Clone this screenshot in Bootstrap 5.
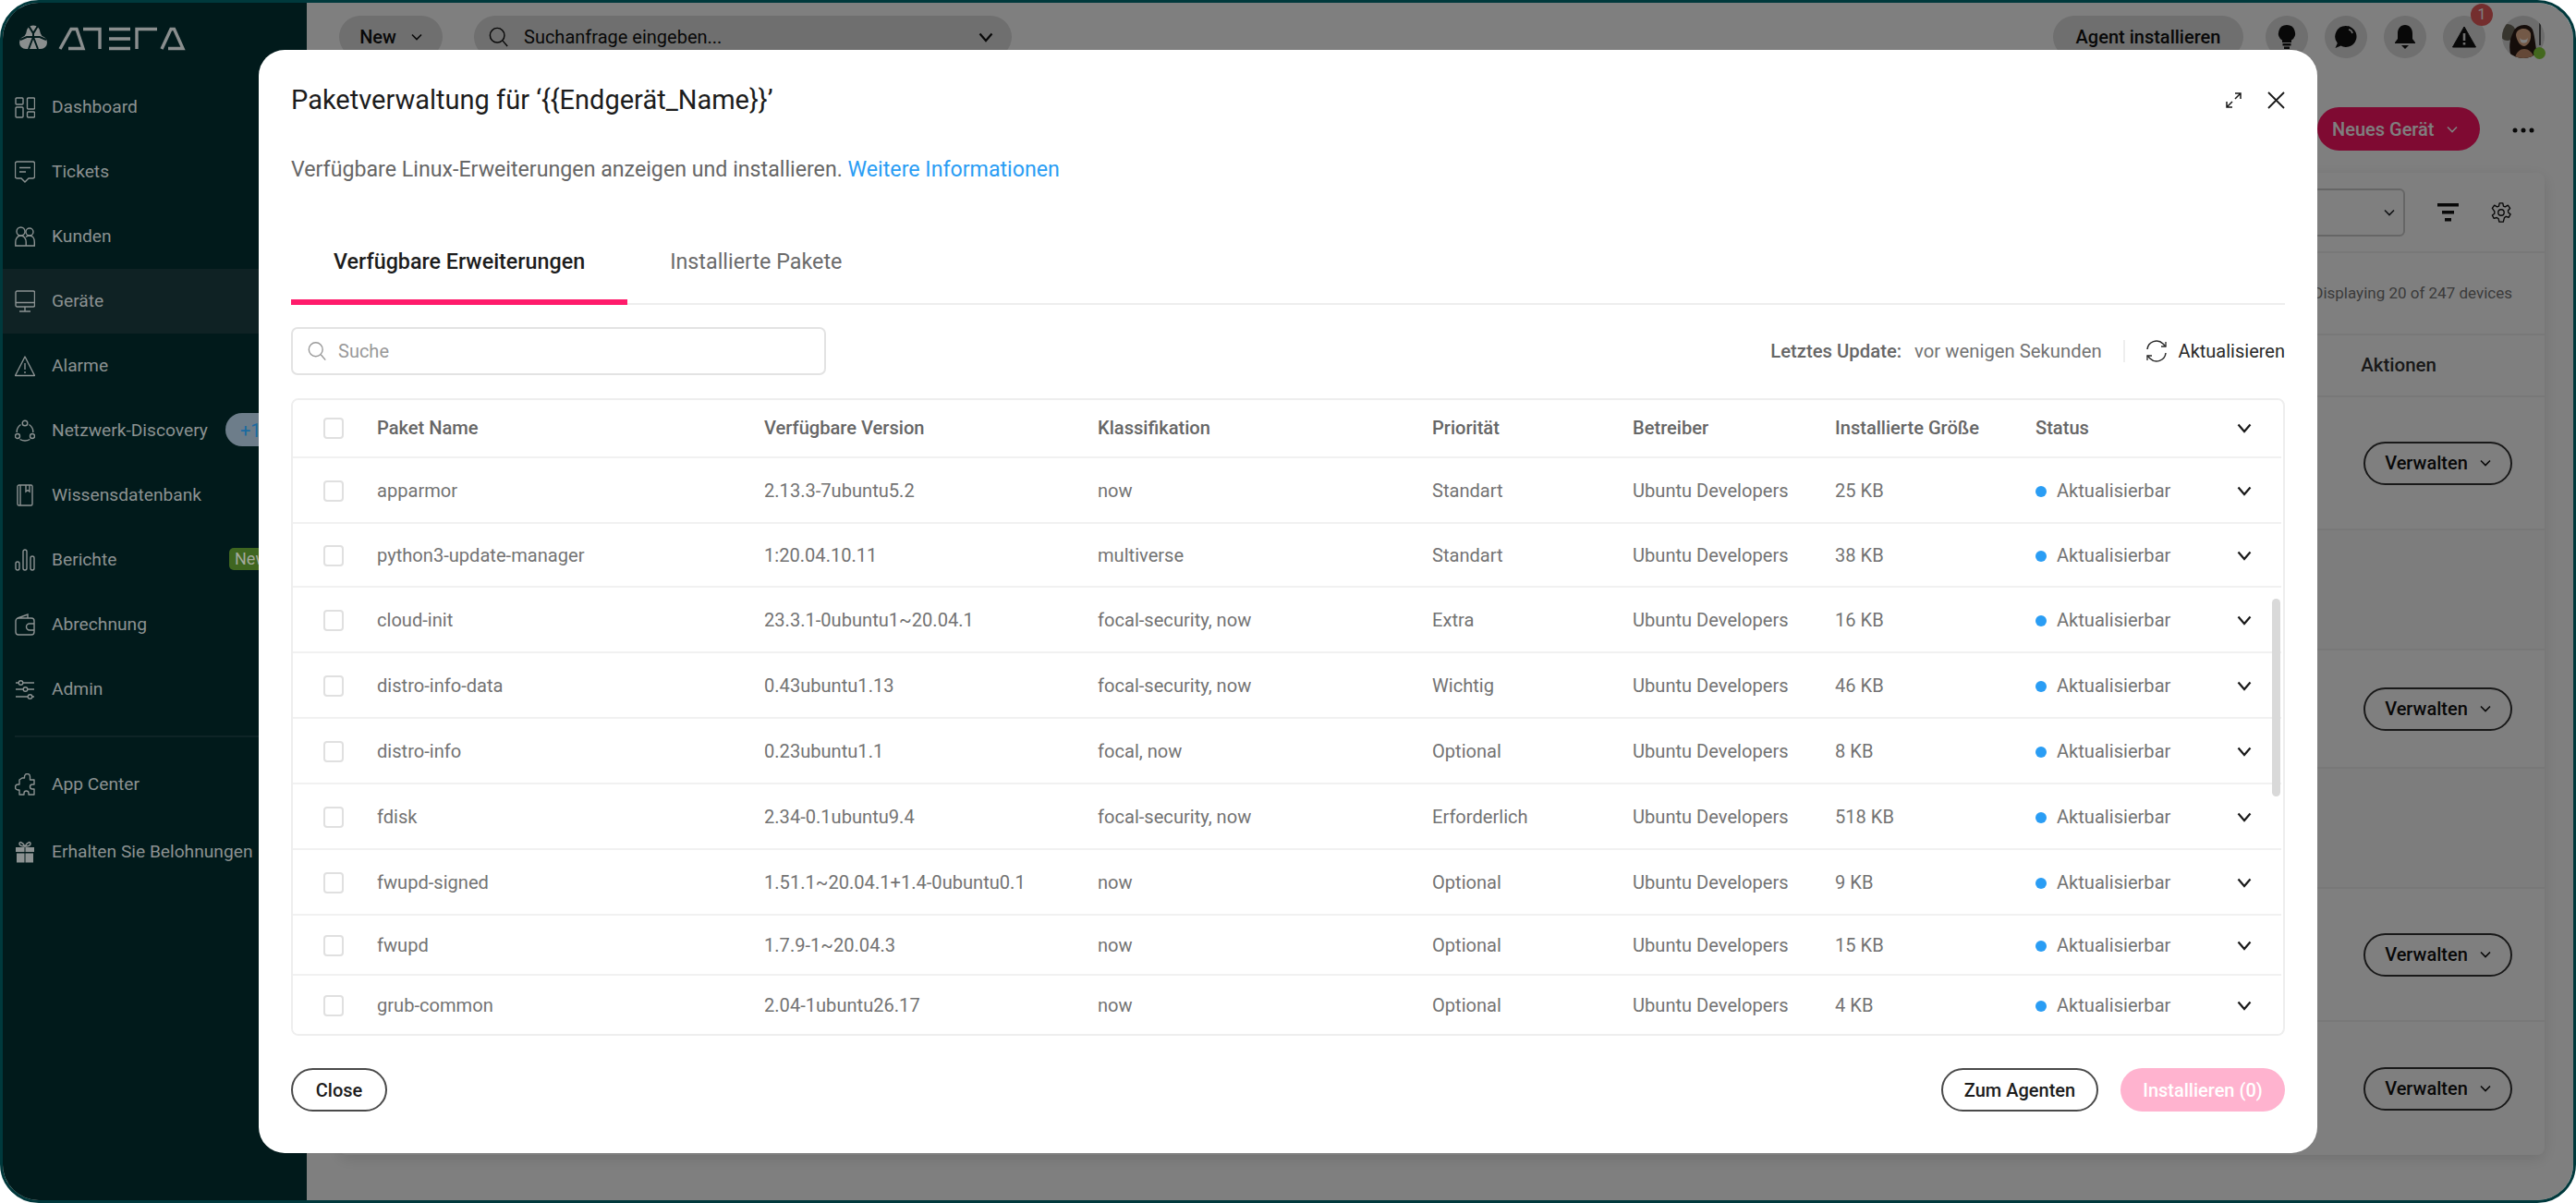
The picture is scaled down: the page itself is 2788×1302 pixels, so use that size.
<!DOCTYPE html>
<html lang="de">
<head>
<meta charset="UTF-8">
<title>Paketverwaltung</title>
<link href="https://cdn.jsdelivr.net/npm/bootstrap@5.3.3/dist/css/bootstrap.min.css" rel="stylesheet">
<style>
    html, body { height: 100%; background: #fff; }
    body { font-family: Roboto, "Liberation Sans", sans-serif; font-size: 20px; overflow: hidden; }

    /* app behind the modal */
    .app-frame { position: relative; width: 2788px; height: 1302px; border: 3px solid #00393c; border-radius: 42px; overflow: hidden; background: #fff; }
    .dim-layer { position: absolute; inset: 0; background: rgba(0,0,0,.5); }
    .side-col { position: relative; z-index: 2; width: 329px; height: 100%; background: #011a1b; flex: none; }
    .logo-svg { display: block; margin: 20px 0 0 15px; }
    .side-item { display: flex; align-items: center; gap: 18px; padding-left: 13px; height: 70px; font-size: 19.2px; color: #8c9292; white-space: nowrap; }
    .side-item svg { width: 22px; height: 24px; flex: none; }
    .side-active { background: #0f2224; }
    .side-list { margin-top: 22px; }
    .side-rule { height: 2px; background: #0e2426; margin: 15px 0 16px 13px; }
    .side-item:last-child { margin-top: 3px; }
    .plus-pill { position: absolute; left: 241px; top: 444px; width: 70px; height: 36px; border-radius: 18px; background: #6d7d8a; color: #1a6aa0; font-size: 20px; padding: 4px 0 0 16px; }
    .new-pill { position: absolute; left: 245px; top: 590px; width: 60px; height: 24px; border-radius: 5px; background: #3f6620; color: #a3aa9c; font-size: 18px; line-height: 24px; padding-left: 6px; }

    .main-col { min-width: 0; }
    .top-row { padding: 14px 31px 0 35px; }
    .top-pill { height: 46px; border-radius: 23px; background: #dedede; color: #111; font-weight: 500; font-size: 20px; display: flex; align-items: center; }
    .p-new { width: 112px; } .p-find { width: 582px; margin-left: 34px; } .p-agent { width: 206px; }
    .ico-group { gap: 18px; margin-left: 24px; }
    .round-ico { width: 46px; height: 46px; border-radius: 50%; background: #dedede; display: flex; align-items: center; justify-content: center; color: #111; position: relative; }
    .count-dot { position: absolute; top: -13px; right: -8px; width: 24px; height: 24px; border-radius: 50%; background: #e85d5d; color: #fff; font-size: 16px; line-height: 24px; text-align: center; }
    .face-wrap { position: relative; width: 46px; height: 46px; }
    .online-dot { position: absolute; right: -1px; bottom: -1px; width: 13px; height: 13px; border-radius: 50%; background: #86d13d; }
    .head-row { margin-top: 53px; padding-right: 31px; }
    .add-pill { width: 176px; height: 47px; border-radius: 24px; background: #ff1464; color: #fff; font-size: 20px; font-weight: 500; padding-left: 16px; gap: 13px; }
    .more-dots { width: 46px; margin-left: 24px; text-align: center; }
    .dev-card { margin: 24px 31px 0 35px; height: 1063px; background: #fff; box-shadow: 0 4px 16px rgba(0,0,0,.12); border-radius: 8px; }
    .dev-row { border-bottom: 2px solid #f0f0f0; display: flex; align-items: center; justify-content: flex-end; padding-right: 35px; }
    .dev-tools { height: 87px; padding-right: 36px; gap: 35px; }
    .dev-select { width: 300px; height: 52px; border: 2px solid #ccc; border-radius: 6px; display: flex; align-items: center; justify-content: flex-end; padding-right: 9px; }
    .dev-info { height: 89px; color: #777; font-size: 17px; }
    .dev-head { height: 67px; font-weight: 500; font-size: 20.5px; color: #333; padding-right: 117px; }
    .dev-h144 { height: 144px; }
    .dev-h128 { height: 128px; }
    .dev-h130 { height: 130px; background: #fbfbfb; }
    .manage-btn { width: 161px; height: 47px; border: 2px solid #333; border-radius: 24px; font-weight: 500; color: #111; display: flex; align-items: center; justify-content: center; gap: 13px; }

    /* modal */
    .sheet-wrap { position: absolute; z-index: 3; left: 277px; top: 51px; width: 2228px; height: 1194px; }
    .sheet-wrap .modal-content { height: 100%; background: #fff; border: 0; border-radius: 28px; padding: 0 35px 45px; }
    .sheet-wrap .modal-header { height: 108px; padding: 0; border: 0; }
    .sheet-title { font-size: 29px; font-weight: 400; color: #1c1c1c; margin: 0; }
    .head-tools { gap: 28px; color: #1a1a1a; }
    .sheet-lead { margin: 4px 0 36px; line-height: 34px; font-size: 23.2px; color: #666; height: 34px; }
    .sheet-lead a { color: #2a9df4; text-decoration: none; }
    .tab-strip { height: 94px; border-bottom: 2px solid #eee; flex-wrap: nowrap; }
    .tab-strip .nav-link { height: 94px; padding: 0 46px; display: flex; align-items: center; color: #6b6b6b; font-size: 23.3px; border: 0; border-radius: 0; margin: 0; }
    .tab-strip .nav-link.active { color: #1c1c1c; font-weight: 500; border-bottom: 6px solid #ff1b6b; padding-top: 6px; background: none; }
    .filter-row { margin-top: 24px; height: 52px; }
    .find-box { width: 579px; height: 52px; border: 2px solid #e3e3e3; border-radius: 7px; padding-left: 16px; gap: 12px; color: #999; font-size: 20px; background: #fff; }
    .upd-label { color: #666; font-weight: 500; font-size: 20.3px; }
    .upd-value { color: #737373; font-size: 20.3px; margin-left: 14px; }
    .upd-rule { width: 2px; height: 24px; background: #eee; margin: 0 22px 0 23px; }
    .upd-btn { color: #2a2a2a; font-size: 20px; gap: 12px; }
    .pkg-box { position: relative; margin-top: 25px; height: 690px; border: 2px solid #eee; border-radius: 8px; overflow: hidden; }
    .pkg-table { table-layout: fixed; width: 2152px; margin: 0; }
    .pkg-table th, .pkg-table td { padding: 0; vertical-align: middle; font-size: 20.1px; border-bottom: 2px solid #f1f1f1; color: #737373; white-space: nowrap; box-shadow: none; background: #fff; }
    .pkg-table th { color: #666; font-weight: 500; height: 62px; }
    .pkg-table td { height: 71px; padding-top: 2px; }
    .pkg-table tbody tr:nth-child(2) td { height: 69px; }
    .pkg-table tbody tr:nth-child(8) td { height: 65px; }
    .pkg-table tbody tr:nth-child(9) td { height: 64px; border-bottom: 0; }
    .c-box { width: 91px; } .c-name { width: 419px; } .c-ver { width: 361px; } .c-cls { width: 362px; }
    .c-pri { width: 217px; } .c-own { width: 219px; } .c-size { width: 217px; } .c-stat { width: 197px; } .c-arrow { width: 69px; }
    .tick-box { display: block; width: 22px; height: 23px; margin-left: 33px; border: 2px solid #e0e0e0; border-radius: 4px; }
    .stat-dot { display: inline-block; width: 12px; height: 12px; border-radius: 50%; background: #2a9df4; margin-right: 11px; }
    .arrow-ico { display: block; margin-left: 21px; color: #1a1a1a; }
    .scroll-thumb { position: absolute; right: 3px; top: 215px; width: 9px; height: 214px; border-radius: 5px; background: #d9d9d9; }
    .sheet-foot { margin-top: 35px; height: 47px; }
    .out-btn { height: 47px; border: 2px solid #4a4a4a; border-radius: 24px; background: #fff; color: #1c1c1c; font-size: 20px; font-weight: 500; padding: 0; display: flex; align-items: center; justify-content: center; }
    .w-close { width: 104px; } .w-agent { width: 170px; }
    .inst-btn { width: 178px; height: 47px; border: 0; border-radius: 24px; background: #ffb3cf; color: #fff; font-size: 20px; font-weight: 500; padding: 0; margin-left: 24px; }
</style>
</head>
<body>
<svg width="0" height="0" class="position-absolute">
    <symbol id="i-search" viewBox="0 0 24 24"><circle cx="10" cy="10" r="8.5" fill="none" stroke="currentColor" stroke-width="1.6"/><path d="M16.5 16.5 22 23" fill="none" stroke="currentColor" stroke-width="1.6"/></symbol>
    <symbol id="i-chev" viewBox="0 0 16 11"><path d="M1.5 1.5 8 9l6.5-7.5" fill="none" stroke="currentColor" stroke-width="2.2"/></symbol>
    <symbol id="i-chev-s" viewBox="0 0 12 8"><path d="M1 1.5 6 6.500l5-5" fill="none" stroke="currentColor" stroke-width="1.6"/></symbol>
</svg>

<div class="app-frame d-flex">
    <!-- left navigation -->
    <aside class="side-col">
        <svg class="logo-svg" width="190" height="36" viewBox="0 0 190 36" fill="none" stroke="#8a8e8e" stroke-width="3.4" role="img" aria-label="Atera">
            <g fill="#8a8e8e" stroke="none"><circle cx="18" cy="12" r="7.500"/><circle cx="10" cy="23" r="7"/><circle cx="26" cy="23" r="7"/><path d="M12 10h12l7 12-6 8H11l-6-8z"/></g>
            <path d="M13 5l5 8 5-8M18 13v4M18 17l-7 0-7 3M18 17l7 0 7 3M18 17l-5 13M18 17l5 13" stroke="#011a1b" stroke-width="2"/>
            <path d="M47 30 59 8.500h6L72 29.500H56"/>
            <path d="M72 8.500h18V30"/>
            <path d="M100 8.500h23M100 19h23M100 29.500h23"/>
            <path d="M130 30V8.500h22"/>
            <path d="M157 30 167 8.500h3.500L180 29.500H164"/>
        </svg>
        <nav class="side-list">
            <div class="side-item"><svg viewBox="0 0 22 24" fill="none" stroke="currentColor" stroke-width="1.400"><rect x="1" y="2" width="8" height="7" rx="1"/><rect x="1" y="12" width="8" height="11" rx="1"/><rect x="13.500" y="2" width="8" height="12" rx="1"/><rect x="13.500" y="17" width="8" height="6" rx="1"/></svg>Dashboard</div>
            <div class="side-item"><svg viewBox="0 0 22 24" fill="none" stroke="currentColor" stroke-width="1.400"><path d="M2.500 1h17a2 2 0 0 1 2 2v14a2 2 0 0 1-2 2H15l-4 4-4-4H2.500a2 2 0 0 1-2-2V3a2 2 0 0 1 2-2z"/><path d="M5 7.500h12M5 12h7"/></svg>Tickets</div>
            <div class="side-item"><svg viewBox="0 0 22 24" fill="none" stroke="currentColor" stroke-width="1.400"><circle cx="6.500" cy="6.500" r="4.500"/><circle cx="16" cy="7" r="4"/><path d="M.8 22v-4c0-4 2.500-7 5.700-7s5.700 3 5.700 7v4zM12 12.500c1-1 2.500-1.500 4-1.500 3.200 0 5.300 3 5.300 7v4H12"/></svg>Kunden</div>
            <div class="side-item side-active"><svg viewBox="0 0 22 24" fill="none" stroke="currentColor" stroke-width="1.400"><rect x="1" y="1" width="20.500" height="17" rx="1.500"/><path d="M1 13.500h20.500M11 18v5M5 23h12"/></svg>Geräte</div>
            <div class="side-item"><svg viewBox="0 0 22 24" fill="none" stroke="currentColor" stroke-width="1.400"><path d="M11 2 21.500 22.500H.5z" stroke-linejoin="round"/><path d="M11 9v7M11 18v2"/></svg>Alarme</div>
            <div class="side-item"><svg viewBox="0 0 22 24" fill="none" stroke="currentColor" stroke-width="1.400"><circle cx="11" cy="4" r="2.800"/><circle cx="3" cy="18" r="2.500"/><circle cx="19" cy="18" r="2.500"/><path d="M6.500 5.500C3.500 7.500 2 10.500 2.200 14M15.500 5.500c3 2 4.500 5 4.300 8.500M5.500 21.500c3.500 2 7.500 2 11 0"/></svg>Netzwerk-Discovery</div>
            <div class="side-item"><svg viewBox="0 0 22 24" fill="none" stroke="currentColor" stroke-width="1.400"><rect x="3" y="1" width="16" height="22" rx="1.500"/><path d="M6 1v22M12 1v7l2-1.500L16 8V1"/></svg>Wissensdatenbank</div>
            <div class="side-item"><svg viewBox="0 0 22 24" fill="none" stroke="currentColor" stroke-width="1.400"><rect x="1" y="14" width="4" height="9" rx="2"/><rect x="9" y="1" width="4" height="22" rx="2"/><rect x="17" y="8" width="4" height="15" rx="2"/></svg>Berichte</div>
            <div class="side-item"><svg viewBox="0 0 22 24" fill="none" stroke="currentColor" stroke-width="1.400"><path d="M1 8v12a3 3 0 0 0 3 3h14a3 3 0 0 0 3-3V8a3 3 0 0 0-3-3H4a3 3 0 0 0-3 3zM3 5l11-4v4"/><path d="M21 11h-5a3.500 3.500 0 0 0 0 7h5"/></svg>Abrechnung</div>
            <div class="side-item"><svg viewBox="0 0 22 24" fill="none" stroke="currentColor" stroke-width="1.400"><path d="M1 5h3M9 5h12M1 12h8M14 12h7M1 20h13M19 20h2"/><circle cx="6.500" cy="5" r="2.300"/><circle cx="11.500" cy="12" r="2.300"/><circle cx="16.500" cy="20" r="2.300"/></svg>Admin</div>
            <div class="side-rule"></div>
            <div class="side-item"><svg viewBox="0 0 22 24" fill="none" stroke="currentColor" stroke-width="1.400"><path d="M8 5h2.500V3.500a3 3 0 0 1 6 0V7h4.500v5h-2a2.500 2.500 0 0 0 0 5h2v6h-6v-1.500a2.500 2.500 0 0 0-5 0V23H5v-5H3.500a3 3 0 0 1 0-6H5V7z" stroke-linejoin="round"/></svg>App Center</div>
            <div class="side-item"><svg viewBox="0 0 22 24" fill="currentColor"><rect x="1" y="7" width="9.500" height="5"/><rect x="11.500" y="7" width="9.500" height="5"/><rect x="2" y="13.500" width="8.500" height="10"/><rect x="11.500" y="13.500" width="8.500" height="10"/><path d="M11 6C8 6 5 5 5 3s3-2.500 6 3c3-5.500 6-5 6-3s-3 3-6 3z" fill="none" stroke="currentColor" stroke-width="1.500"/></svg>Erhalten Sie Belohnungen</div>
        </nav>
        <span class="plus-pill">+1</span>
        <span class="new-pill">New</span>
    </aside>

    <!-- page behind -->
    <main class="main-col flex-grow-1">
        <div class="top-row d-flex align-items-center">
            <div class="top-pill p-new justify-content-center gap-3">New <svg width="12" height="8"><use href="#i-chev-s"/></svg></div>
            <div class="top-pill p-find justify-content-between px-3"><span class="d-flex align-items-center gap-3 fw-normal"><svg width="22" height="24"><use href="#i-search"/></svg>Suchanfrage eingeben...</span><svg class="me-1" width="16" height="11"><use href="#i-chev"/></svg></div>
            <div class="top-pill p-agent justify-content-center ms-auto">Agent installieren</div>
            <div class="ico-group d-flex">
                <div class="round-ico"><svg width="22" height="28" viewBox="0 0 22 28" fill="currentColor"><path d="M11 1a9 9 0 0 0-5 16.500V20h10v-2.500A9 9 0 0 0 11 1z"/><rect x="6.500" y="21" width="9" height="2.500"/><rect x="8" y="24.500" width="6" height="2.500"/></svg></div>
                <div class="round-ico"><svg width="26" height="26" viewBox="0 0 26 26" fill="currentColor"><path d="M13 1a11.500 11.500 0 1 1-5.500 21.600L1.500 25l2.300-5.300A11.500 11.500 0 0 1 13 1z"/><path d="M16 5a5 5 0 0 1 4 4" fill="none" stroke="#dedede" stroke-width="1.500"/></svg></div>
                <div class="round-ico"><svg width="24" height="28" viewBox="0 0 24 28" fill="currentColor"><path d="M12 1c-5 0-8 4-8 9v6l-3 4v1h22v-1l-3-4v-6c0-5-3-9-8-9z"/><path d="M8 23h8l-4 4z"/></svg></div>
                <div class="round-ico"><svg width="26" height="24" viewBox="0 0 26 24"><path d="M13 1 25.500 23H.5z" fill="currentColor" stroke="currentColor" stroke-linejoin="round"/><path d="M13 8v8M13 18v2.500" stroke="#dedede" stroke-width="2.600"/></svg><span class="count-dot">1</span></div>
                <div class="face-wrap">
                    <svg width="46" height="46" viewBox="0 0 46 46"><defs><clipPath id="face-clip"><circle cx="23" cy="23" r="23"/></clipPath></defs><g clip-path="url(#face-clip)"><rect width="46" height="46" fill="#d8d8d8"/><circle cx="6" cy="18" r="9" fill="#6f6a5c"/><path d="M40 8h2v24h-2z" fill="#555"/><path d="M10 46c-3-12-2-20 2-28 3-9 17-11 21-3 3 8 3 20 6 31z" fill="#2b1a14"/><path d="M15 21c0-8 13-10 16-2 1 8-3 13-7 14-4 0-8-5-9-12z" fill="#e6b28f"/><path d="M19 24c2 3 7 3 9 0l-1 4c-2 2-5 2-7 0z" fill="#fff"/><path d="M14 46c1-7 6-10 10-10s9 3 11 10z" fill="#c9916f"/></g></svg>
                    <span class="online-dot"></span>
                </div>
            </div>
        </div>
        <div class="head-row d-flex justify-content-end align-items-center">
            <div class="add-pill d-flex align-items-center">Neues Gerät <svg width="12" height="8"><use href="#i-chev-s"/></svg></div>
            <div class="more-dots" aria-label="Mehr"><svg width="24" height="6" viewBox="0 0 24 6" fill="#111"><circle cx="3" cy="3" r="2.500"/><circle cx="12" cy="3" r="2.500"/><circle cx="21" cy="3" r="2.500"/></svg></div>
        </div>
        <section class="dev-card">
            <div class="dev-row dev-tools">
                <div class="dev-select"><svg width="12" height="8"><use href="#i-chev-s"/></svg></div>
                <svg width="23" height="20" viewBox="0 0 23 20" fill="#111"><rect width="23" height="3.500"/><rect x="5" y="8" width="13" height="3.500"/><rect x="8" y="16" width="7" height="3.500"/></svg>
                <svg width="22" height="24" viewBox="0 0 24 24" fill="none" stroke="#111" stroke-width="1.500"><circle cx="12" cy="12" r="3.500"/><path d="M10 1h4l.7 3.400 2 .9L20 3.500l2.500 3.500-2.300 2.500.2 2.500 2.600 2-2 3.700-3.300-1-1.900 1.400L14.500 23h-4.800l-.9-3.800-2-1.200-3.300 1-2-3.700 2.600-2 .1-2.500L1.500 7 4 3.500 7.300 5.300l2-.9z" stroke-linejoin="round"/></svg>
            </div>
            <div class="dev-row dev-info">Displaying 20 of 247 devices</div>
            <div class="dev-row dev-head">Aktionen</div>
            <div class="dev-row dev-h144"><div class="manage-btn">Verwalten <svg width="12" height="8"><use href="#i-chev-s"/></svg></div></div>
            <div class="dev-row dev-h130"></div>
            <div class="dev-row dev-h128"><div class="manage-btn">Verwalten <svg width="12" height="8"><use href="#i-chev-s"/></svg></div></div>
            <div class="dev-row dev-h130"></div>
            <div class="dev-row dev-h144"><div class="manage-btn">Verwalten <svg width="12" height="8"><use href="#i-chev-s"/></svg></div></div>
            <div class="dev-row dev-h144 border-0"><div class="manage-btn">Verwalten <svg width="12" height="8"><use href="#i-chev-s"/></svg></div></div>
        </section>
    </main>

    <div class="dim-layer"></div>

    <!-- modal -->
    <div class="sheet-wrap">
        <div class="modal-content">
            <div class="modal-header justify-content-between">
                <h1 class="sheet-title">Paketverwaltung für ‘{{Endgerät_Name}}’</h1>
                <div class="head-tools d-flex align-items-center">
                    <svg width="17" height="17" viewBox="0 0 17 17" fill="none" stroke="currentColor" stroke-width="1.500"><path d="M1 16 16 1M10 1h6v6M1 10v6h6"/><path d="M7 10 10 7" stroke="#fff" stroke-width="3"/></svg>
                    <svg width="19" height="19" viewBox="0 0 19 19" fill="none" stroke="currentColor" stroke-width="1.800"><path d="M1 1l17 17M18 1 1 18"/></svg>
                </div>
            </div>
            <p class="sheet-lead">Verfügbare Linux-Erweiterungen anzeigen und installieren. <a href="#">Weitere Informationen</a></p>
            <ul class="nav tab-strip">
                <li class="nav-item"><a class="nav-link active" href="#">Verfügbare Erweiterungen</a></li>
                <li class="nav-item"><a class="nav-link" href="#">Installierte Pakete</a></li>
            </ul>
            <div class="filter-row d-flex align-items-center justify-content-between">
                <div class="find-box d-flex align-items-center"><svg width="21" height="24"><use href="#i-search"/></svg>Suche</div>
                <div class="d-flex align-items-center">
                    <span class="upd-label">Letztes Update:</span>
                    <span class="upd-value">vor wenigen Sekunden</span>
                    <span class="upd-rule"></span>
                    <span class="upd-btn d-flex align-items-center"><svg width="24" height="24" viewBox="0 0 24 24" fill="none" stroke="currentColor" stroke-width="1.500"><path d="M2 10a10 10 0 0 1 17-6l3 3M22 14a10 10 0 0 1-17 6l-3-3"/><path d="M22 2v5h-5M2 22v-5h5" stroke-width="1.300"/></svg>Aktualisieren</span>
                </div>
            </div>
            <div class="pkg-box">
                <table class="table pkg-table">
                    <colgroup><col class="c-box"><col class="c-name"><col class="c-ver"><col class="c-cls"><col class="c-pri"><col class="c-own"><col class="c-size"><col class="c-stat"><col class="c-arrow"></colgroup>
                    <thead>
                        <tr><th><span class="tick-box"></span></th><th>Paket Name</th><th>Verfügbare Version</th><th>Klassifikation</th><th>Priorität</th><th>Betreiber</th><th>Installierte Größe</th><th>Status</th><th><svg class="arrow-ico" width="16" height="11"><use href="#i-chev"/></svg></th></tr>
                    </thead>
                    <tbody id="pkgRows"></tbody>
                </table>
                <div class="scroll-thumb"></div>
            </div>
            <div class="sheet-foot d-flex align-items-center">
                <button class="out-btn w-close" type="button">Close</button>
                <button class="out-btn w-agent ms-auto" type="button">Zum Agenten</button>
                <button class="inst-btn" type="button">Installieren (0)</button>
            </div>
        </div>
    </div>
</div>

<script src="https://cdn.jsdelivr.net/npm/bootstrap@5.3.3/dist/js/bootstrap.bundle.min.js"></script>
<script>
    const pkgs = [
        ['apparmor', '2.13.3-7ubuntu5.2', 'now', 'Standart', '25 KB'],
        ['python3-update-manager', '1:20.04.10.11', 'multiverse', 'Standart', '38 KB'],
        ['cloud-init', '23.3.1-0ubuntu1~20.04.1', 'focal-security, now', 'Extra', '16 KB'],
        ['distro-info-data', '0.43ubuntu1.13', 'focal-security, now', 'Wichtig', '46 KB'],
        ['distro-info', '0.23ubuntu1.1', 'focal, now', 'Optional', '8 KB'],
        ['fdisk', '2.34-0.1ubuntu9.4', 'focal-security, now', 'Erforderlich', '518 KB'],
        ['fwupd-signed', '1.51.1~20.04.1+1.4-0ubuntu0.1', 'now', 'Optional', '9 KB'],
        ['fwupd', '1.7.9-1~20.04.3', 'now', 'Optional', '15 KB'],
        ['grub-common', '2.04-1ubuntu26.17', 'now', 'Optional', '4 KB']
    ];
    document.getElementById('pkgRows').innerHTML = pkgs.map(p => `<tr>
        <td><span class="tick-box"></span></td><td>${p[0]}</td><td>${p[1]}</td><td>${p[2]}</td><td>${p[3]}</td>
        <td>Ubuntu Developers</td><td>${p[4]}</td>
        <td><span class="stat-dot"></span>Aktualisierbar</td>
        <td><svg class="arrow-ico" width="16" height="11"><use href="#i-chev"/></svg></td></tr>`).join('');
</script>
</body>
</html>
